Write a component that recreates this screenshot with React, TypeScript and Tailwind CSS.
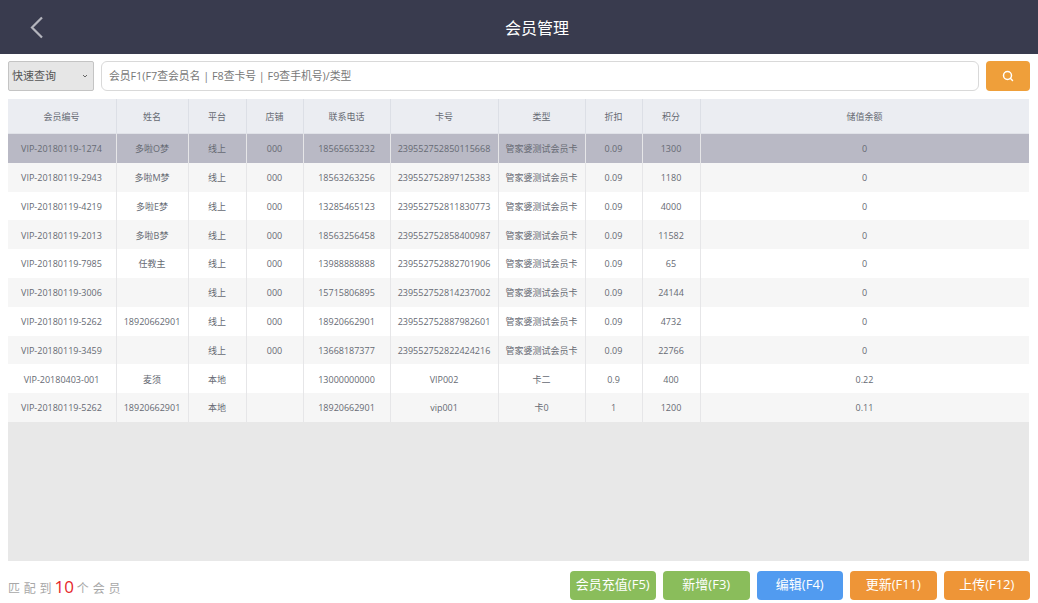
import React from "react";
import { Search } from "lucide-react";

const cols = [
  "w-[109px]", "w-[72px]", "w-[58px]", "w-[57px]", "w-[87px]",
  "w-[108px]", "w-[87px]", "w-[57px]", "w-[58px]", "w-[328px]",
];
const head = ["会员编号", "姓名", "平台", "店铺", "联系电话", "卡号", "类型", "折扣", "积分", "储值余额"];
const T = "管家婆测试会员卡";
const rows = [
  ["VIP-20180119-1274", "多啦O梦", "线上", "000", "18565653232", "239552752850115668", T, "0.09", "1300", "0"],
  ["VIP-20180119-2943", "多啦M梦", "线上", "000", "18563263256", "239552752897125383", T, "0.09", "1180", "0"],
  ["VIP-20180119-4219", "多啦E梦", "线上", "000", "13285465123", "239552752811830773", T, "0.09", "4000", "0"],
  ["VIP-20180119-2013", "多啦B梦", "线上", "000", "18563256458", "239552752858400987", T, "0.09", "11582", "0"],
  ["VIP-20180119-7985", "任教主", "线上", "000", "13988888888", "239552752882701906", T, "0.09", "65", "0"],
  ["VIP-20180119-3006", "", "线上", "000", "15715806895", "239552752814237002", T, "0.09", "24144", "0"],
  ["VIP-20180119-5262", "18920662901", "线上", "000", "18920662901", "239552752887982601", T, "0.09", "4732", "0"],
  ["VIP-20180119-3459", "", "线上", "000", "13668187377", "239552752822424216", T, "0.09", "22766", "0"],
  ["VIP-20180403-001", "麦须", "本地", "", "13000000000", "VIP002", "卡二", "0.9", "400", "0.22"],
  ["VIP-20180119-5262", "18920662901", "本地", "", "18920662901", "vip001", "卡0", "1", "1200", "0.11"],
];
const buttons = [
  ["会员充值(F5)", "bg-[#8abd5b]"],
  ["新增(F3)", "bg-[#8abd5b]"],
  ["编辑(F4)", "bg-[#519bf0]"],
  ["更新(F11)", "bg-[#ee9537]"],
  ["上传(F12)", "bg-[#ee9537]"],
];

export default function App() {
  return (
    <div className="w-[1038px] h-[603px] overflow-hidden bg-white flex flex-col font-['Open_Sans','Noto_Sans_CJK_SC',sans-serif] text-[#666a73]">
      <header className="h-[54px] shrink-0 bg-[#393b4e] flex items-center justify-center relative pl-[36px]">
        <svg className="absolute left-[28px] top-[14px]" width="18" height="26" viewBox="0 0 18 26" fill="none" stroke="#b4b5bd" strokeWidth="2.2">
          <path d="M14 3.5L4 13.5l10 10" />
        </svg>
        <span className="text-white text-[16px] pt-px">会员管理</span>
      </header>
      <div className="h-[37px] shrink-0 flex items-end pl-2 pr-2 gap-[7px]">
        <div className="w-[86px] h-[30px] rounded-[2px] border border-[#c4c4c4] bg-[#e6e6e6] flex items-center justify-between pl-[3px] pr-[5px] text-[11px] text-[#555]">
          <span>快速查询</span>
          <svg width="6" height="4" viewBox="0 0 6 4" fill="none" stroke="#666" strokeWidth="1"><path d="M1 1l2 2 2-2" /></svg>
        </div>
        <div className="w-[879px] h-[30px] rounded-md border border-[#d9d9d9] bg-white flex items-center pl-[7px] text-[10.8px] text-[#777]">
          会员F1(F7查会员名 | F8查卡号 | F9查手机号)/类型
        </div>
        <button className="w-[44px] h-[30px] rounded-[4px] bg-[#ef9f3a] flex items-center justify-center text-white">
          <Search size={12} strokeWidth={3} />
        </button>
      </div>
      <div className="mt-[8px] ml-2 w-[1021px] h-[462px] shrink-0 bg-[#e8e8e8] text-[9px] text-center">
        <div className="flex h-[35px] bg-[#ebedf2] border-b border-b-[#e0e2e8]">
          {head.map((h, j) => (
            <div key={h} className={`${cols[j]} flex items-center justify-center pt-[2px] pr-px border-r border-r-[#dcdfe6] last:border-r-0`}>{h}</div>
          ))}
        </div>
        {rows.map((r, i) => (
          <div key={i} className={i === 0 ? "flex h-[28.8px] bg-[#b9b9c5]" : i % 2 === 1 ? "flex h-[28.8px] bg-[#f6f6f6]" : "flex h-[28.8px] bg-white"}>
            {r.map((c, j) => (
              <div key={j} className={`${cols[j]} flex items-center justify-center pt-px pr-px whitespace-nowrap border-r border-r-[#e6e6e8] last:border-r-0`}>{c}</div>
            ))}
          </div>
        ))}
      </div>
      <footer className="flex-1 flex items-center justify-between pl-2 pr-2 pt-[6px]">
        <div className="flex items-baseline text-[12px] text-[#a8a8a8] tracking-[3.8px] pt-[5px]">
          <span>匹配到</span>
          <span className="text-[17px] leading-none text-[#e5262a] tracking-normal ml-[-1px] mr-[3px]">10</span>
          <span>个会员</span>
        </div>
        <div className="flex gap-[7px]">
          {buttons.map(([t, c]) => (
            <button key={t} className={`w-[86.5px] h-[29px] rounded-[4px] text-white text-[13px] ${c}`}>{t}</button>
          ))}
        </div>
      </footer>
    </div>
  );
}
